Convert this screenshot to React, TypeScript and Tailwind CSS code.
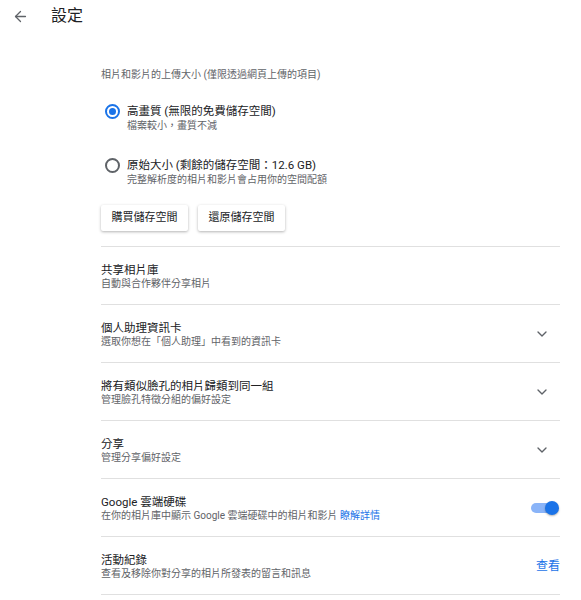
import React from 'react';
import { ArrowLeft, ChevronDown } from 'lucide-react';

const font = { fontFamily: 'Roboto, "Noto Sans CJK TC", sans-serif' };

function Radio({ checked }: { checked: boolean }) {
  return (
    <div
      className={`w-[15px] h-[15px] rounded-full border-2 flex items-center justify-center shrink-0 ${
        checked ? 'border-[#1a73e8]' : 'border-[#5f6368]'
      }`}
    >
      {checked && <div className="w-[7px] h-[7px] rounded-full bg-[#1a73e8]" />}
    </div>
  );
}

function Row({ title, sub, right }: { title: React.ReactNode; sub: React.ReactNode; right?: React.ReactNode }) {
  return (
    <div className="flex items-center h-[58px] border-b border-[#e0e0e0]">
      <div className="flex-1 flex flex-col pt-[2px]">
        <div className="text-[11.5px] leading-[14px] text-[#202124]">{title}</div>
        <div className="text-[10px] leading-[14px] text-[#5f6368]">{sub}</div>
      </div>
      {right}
    </div>
  );
}

const Chevron = () => <ChevronDown className="w-[16px] h-[16px] mr-[10px] text-[#5f6368]" strokeWidth={2} />;

export default function App() {
  return (
    <div className="w-[581px] h-[600px] bg-white overflow-hidden" style={font}>
      <div className="flex items-center h-[32px]">
        <ArrowLeft className="ml-[12px] w-[17px] h-[17px] text-[#5f6368]" strokeWidth={1.8} />
        <div className="ml-[22px] text-[16px] text-[#202124]">設定</div>
      </div>

      <div className="ml-[101px] w-[459px]">
        <div className="mt-[36px] text-[10px] leading-[14px] text-[#5f6368]">相片和影片的上傳大小 (僅限透過網頁上傳的項目)</div>

        <div className="mt-[22px] flex items-start">
          <div className="ml-[4px]">
            <Radio checked />
          </div>
          <div className="ml-[7px] flex flex-col">
            <div className="text-[11.5px] leading-[15px] text-[#202124]">高畫質 (無限的免費儲存空間)</div>
            <div className="text-[10px] leading-[14px] text-[#5f6368]">檔案較小，畫質不減</div>
          </div>
        </div>

        <div className="mt-[25px] flex items-start">
          <div className="ml-[4px]">
            <Radio checked={false} />
          </div>
          <div className="ml-[7px] flex flex-col">
            <div className="text-[11.5px] leading-[15px] text-[#202124]">原始大小 (剩餘的儲存空間：12.6 GB)</div>
            <div className="text-[10px] leading-[14px] text-[#5f6368]">完整解析度的相片和影片會占用你的空間配額</div>
          </div>
        </div>

        <div className="mt-[18px] flex gap-[10px]">
          <button className="w-[87px] h-[26px] text-[11px] text-[#202124] bg-white rounded-[2px] shadow-[0_1px_3px_rgba(0,0,0,0.3)]">購買儲存空間</button>
          <button className="w-[87px] h-[26px] text-[11px] text-[#202124] bg-white rounded-[2px] shadow-[0_1px_3px_rgba(0,0,0,0.3)]">還原儲存空間</button>
        </div>

        <div className="mt-[15px] border-b border-[#e0e0e0]" />

        <Row title="共享相片庫" sub="自動與合作夥伴分享相片" />
        <Row title="個人助理資訊卡" sub="選取你想在「個人助理」中看到的資訊卡" right={<Chevron />} />
        <Row title="將有類似臉孔的相片歸類到同一組" sub="管理臉孔特徵分組的偏好設定" right={<Chevron />} />
        <Row title="分享" sub="管理分享偏好設定" right={<Chevron />} />
        <Row
          title="Google 雲端硬碟"
          sub={
            <>
              在你的相片庫中顯示 Google 雲端硬碟中的相片和影片 <span className="text-[#1a73e8]">瞭解詳情</span>
            </>
          }
          right={
            <div className="relative w-[28px] h-[14px] mr-[1px]">
              <div className="absolute left-0 top-[2px] w-[26px] h-[10px] rounded-full bg-[#8ab4f8]" />
              <div className="absolute right-0 top-0 w-[14px] h-[14px] rounded-full bg-[#1a73e8] shadow-[0_1px_2px_rgba(0,0,0,0.3)]" />
            </div>
          }
        />
        <Row title="活動紀錄" sub="查看及移除你對分享的相片所發表的留言和訊息" right={<span className="text-[12px] text-[#1a73e8]">查看</span>} />
      </div>
    </div>
  );
}
